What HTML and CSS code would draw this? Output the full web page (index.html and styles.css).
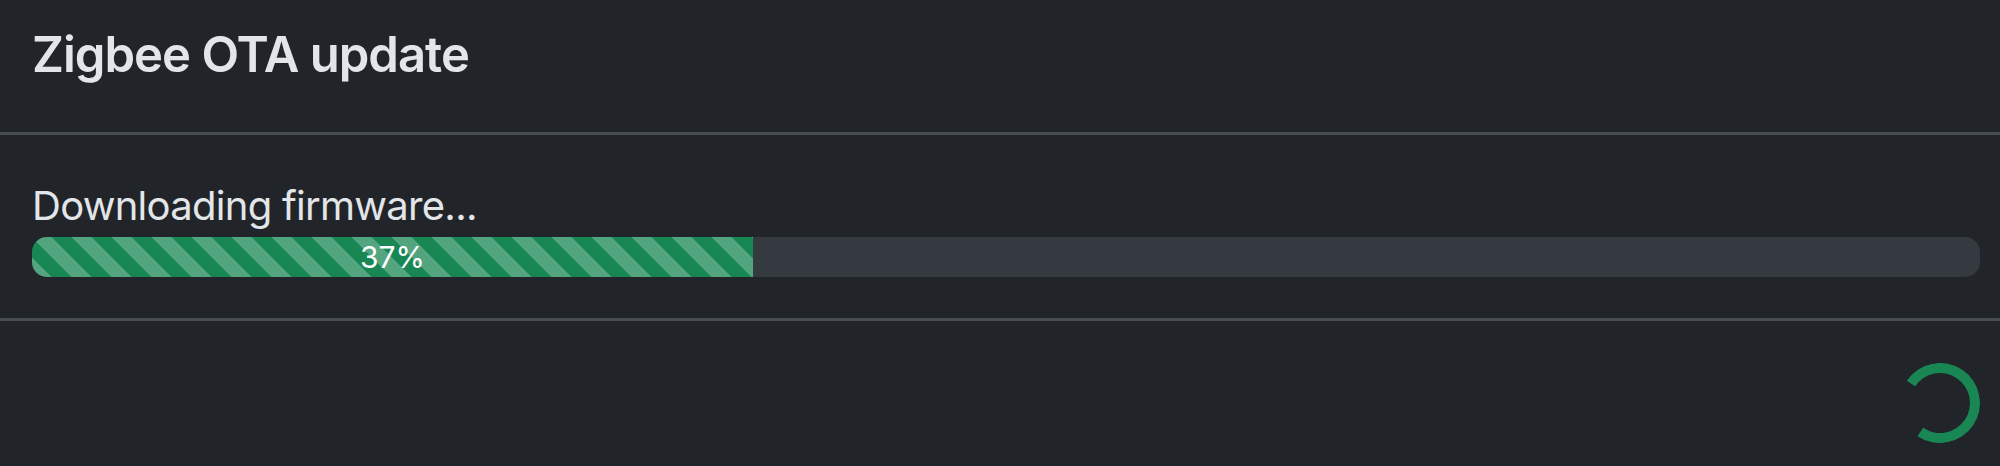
FILE: index.html
```html
<!DOCTYPE html>
<html lang="en">
<head>
<meta charset="utf-8">
<title>Zigbee OTA update</title>
<link rel="stylesheet" href="styles.css">
</head>
<body>
<div class="modal">
  <div class="modal-header">
    <h5 class="modal-title">Zigbee OTA update</h5>
  </div>
  <div class="modal-body">
    <div class="status">Downloading firmware...</div>
    <div class="progress">
      <div class="progress-bar" style="width: 37%">37%</div>
    </div>
  </div>
  <div class="modal-footer">
    <div class="spinner" role="status"></div>
  </div>
</div>
</body>
</html>
```
FILE: styles.css
```css
html, body {
  margin: 0;
  padding: 0;
  background: #212529;
  color: #dee2e6;
  font-family: Inter, "Liberation Sans", Arial, sans-serif;
}

.modal {
  display: flex;
  flex-direction: column;
  height: 466px;
  overflow: hidden;
}

.modal-header {
  padding: 17px 20px 40px 32px;
  border-bottom: 3px solid #464c52;
}

.modal-title {
  margin: 0;
  font-size: 49px;
  line-height: 75px;
  font-weight: 600;
  letter-spacing: -0.02em;
  color: #e3e6e9;
}

.modal-body {
  padding: 40px 20px 41px 32px;
  border-bottom: 3px solid #464c52;
}

.status {
  font-size: 40px;
  line-height: 62px;
  letter-spacing: -0.018em;
  color: #e3e6e9;
}

.progress {
  display: flex;
  height: 40px;
  background: #343a40;
  border-radius: 15px;
  overflow: hidden;
  font-size: 30px;
}

.progress-bar {
  display: flex;
  align-items: center;
  justify-content: center;
  background-color: #198754;
  background-image: linear-gradient(45deg,
    rgba(255,255,255,.25) 25%, transparent 25%, transparent 50%,
    rgba(255,255,255,.25) 50%, rgba(255,255,255,.25) 75%, transparent 75%, transparent);
  background-size: 40px 40px;
  color: #fff;
  white-space: nowrap;
}

.modal-footer {
  display: flex;
  justify-content: flex-end;
  padding: 30px 20px;
}

.spinner {
  box-sizing: border-box;
  width: 80px;
  height: 80px;
  margin-top: 12px;
  border: 10px solid #198754;
  border-right-color: transparent;
  border-radius: 50%;
  transform: rotate(169deg);
}
```
